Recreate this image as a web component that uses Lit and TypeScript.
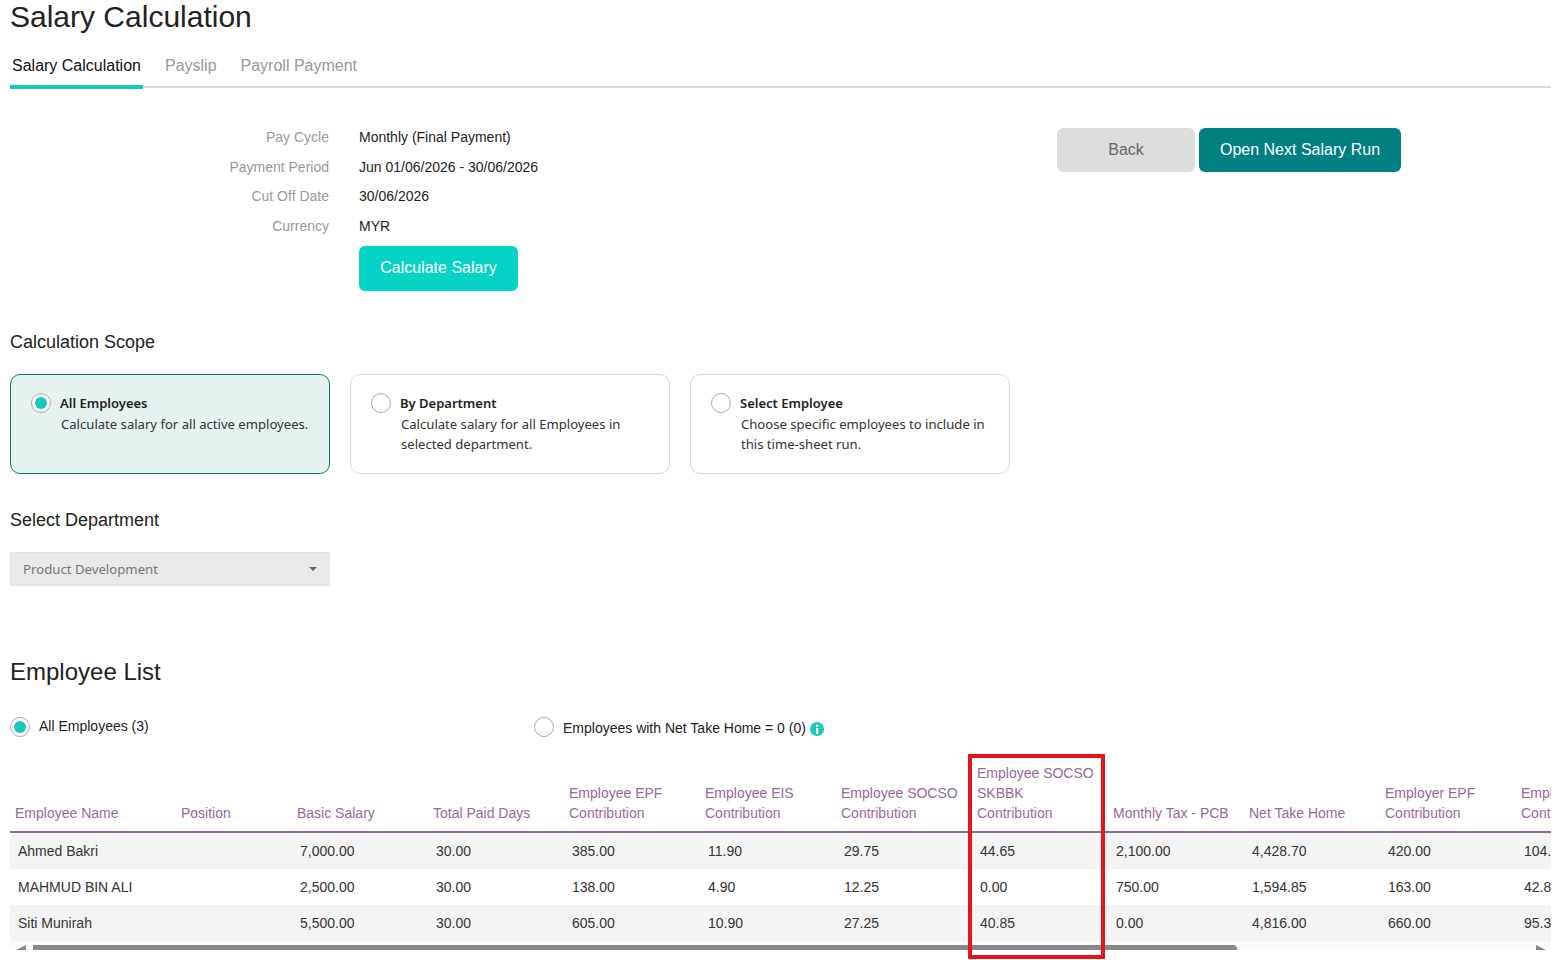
import { LitElement, html, css } from "lit";
import { customElement } from "lit/decorators.js";

const HEADERS = [
  ["Employee Name"],
  ["Position"],
  ["Basic Salary"],
  ["Total Paid Days"],
  ["Employee EPF", "Contribution"],
  ["Employee EIS", "Contribution"],
  ["Employee SOCSO", "Contribution"],
  ["Employee SOCSO", "SKBBK", "Contribution"],
  ["Monthly Tax - PCB"],
  ["Net Take Home"],
  ["Employer EPF", "Contribution"],
  ["Employer EIS", "Contribution"],
];

const ROWS = [
  ["Ahmed Bakri", "", "7,000.00", "30.00", "385.00", "11.90", "29.75", "44.65", "2,100.00", "4,428.70", "420.00", "104.65"],
  ["MAHMUD BIN ALI", "", "2,500.00", "30.00", "138.00", "4.90", "12.25", "0.00", "750.00", "1,594.85", "163.00", "42.80"],
  ["Siti Munirah", "", "5,500.00", "30.00", "605.00", "10.90", "27.25", "40.85", "0.00", "4,816.00", "660.00", "95.30"],
];

const COL_WIDTHS = [166, 116, 136, 136, 136, 136, 136, 136, 136, 136, 136, 136];

const SCOPES = [
  { title: "All Employees", text: "Calculate salary for all active employees.", on: true },
  { title: "By Department", text: "Calculate salary for all Employees in selected department.", on: false },
  { title: "Select Employee", text: "Choose specific employees to include in this time-sheet run.", on: false },
];

const INFO = [
  ["Pay Cycle", "Monthly (Final Payment)"],
  ["Payment Period", "Jun 01/06/2026 - 30/06/2026"],
  ["Cut Off Date", "30/06/2026"],
  ["Currency", "MYR"],
];

@customElement("app-root")
export class AppRoot extends LitElement {
  static styles = css`
    :host {
      display: block;
      height: 960px;
      overflow: hidden;
      padding: 0 15px 0 10px;
      font-family: "Liberation Sans", Arial, sans-serif;
      font-size: 14px;
      color: #333;
      background: #fff;
    }
    h1 {
      margin: 0;
      font-size: 30px;
      font-weight: 400;
      line-height: 34px;
      color: #222;
    }
    .tabs {
      display: flex;
      height: 52px;
      border-bottom: 2px solid #cfdcdc;
    }
    .tab {
      height: 29px;
      margin: 0 20px -3px 0;
      padding: 22px 2px 0;
      font-size: 16px;
      line-height: 20px;
      color: #999;
    }
    .tab.active {
      color: #111;
      border-bottom: 4px solid #17c9b8;
    }
    .summary {
      display: flex;
      align-items: flex-start;
      margin-top: 34.3px;
      padding-right: 150px;
    }
    .info {
      display: grid;
      grid-template-columns: 319px auto;
      grid-auto-rows: 29.6px;
      column-gap: 30px;
      align-items: center;
    }
    .info .label {
      text-align: right;
      color: #999;
    }
    .info .value {
      color: #222;
    }
    .actions {
      display: flex;
      gap: 4px;
      margin: 5.7px 0 0 auto;
    }
    button {
      height: 44px;
      border: none;
      border-radius: 6px;
      font: inherit;
      font-size: 16px;
      cursor: pointer;
    }
    .back {
      width: 138px;
      background: #ddd;
      color: #666;
    }
    .next {
      width: 202px;
      background: #008080;
      color: #fff;
    }
    .calc {
      display: block;
      width: 159px;
      height: 45px;
      margin: 5.3px 0 0 349px;
      background: #05d3c6;
      color: #fff;
    }
    h2 {
      margin: 39px 0 0;
      font-size: 18px;
      font-weight: 400;
      line-height: 24px;
      color: #222;
    }
    .cards {
      display: flex;
      gap: 20px;
      margin-top: 20px;
    }
    .card {
      box-sizing: border-box;
      width: 320px;
      height: 100px;
      padding: 18px 20px;
      display: flex;
      gap: 9px;
      border: 1px solid #d3dadc;
      border-radius: 10px;
      font-family: "Noto Sans", sans-serif;
      font-size: 13.1px;
      line-height: 20px;
      color: #333;
    }
    .card.on {
      background: #e5f2ef;
      border-color: #00806f;
    }
    .card .title {
      font-size: 13px;
      font-weight: 600;
      color: #222;
      line-height: 20px;
    }
    .card .text {
      margin: 1px 0 0 1px;
    }
    .radio {
      box-sizing: border-box;
      flex: none;
      width: 20px;
      height: 20px;
      border: 1px solid #aaa;
      border-radius: 50%;
      background: #fff;
      display: flex;
      align-items: center;
      justify-content: center;
    }
    .radio.on::after {
      content: "";
      width: 12px;
      height: 12px;
      border-radius: 50%;
      background: #17c9b8;
    }
    .dept {
      margin-top: 34px;
    }
    .select {
      box-sizing: border-box;
      width: 320px;
      height: 34px;
      margin-top: 20px;
      padding: 0 12px;
      display: flex;
      align-items: center;
      justify-content: space-between;
      background: #e9e9e9;
      border: 1px solid #e2e2e2;
      font-family: "Noto Sans", sans-serif;
      font-size: 13.2px;
      color: #777;
    }
    .caret {
      width: 0;
      height: 0;
      border-left: 4px solid transparent;
      border-right: 4px solid transparent;
      border-top: 4px solid #666;
    }
    .list-title {
      margin: 71px 0 0;
      font-size: 24px;
      font-weight: 400;
      line-height: 30px;
      color: #222;
    }
    .filters {
      display: flex;
      height: 20px;
      margin-top: 30px;
      color: #222;
    }
    .filter {
      display: flex;
      align-items: center;
      gap: 9px;
    }
    .filter.first {
      width: 524px;
    }
    .filter.first span {
      padding-bottom: 2px;
    }
    .filter.second span {
      padding-top: 2px;
    }
    .filter svg {
      display: block;
      margin: 4px 0 0 -5px;
    }
    .grid-wrap {
      position: relative;
      margin-top: 18px;
    }
    .scroller {
      overflow: hidden;
    }
    table {
      table-layout: fixed;
      width: 1642px;
      border-collapse: separate;
      border-spacing: 0;
    }
    th {
      padding: 8px 5px;
      border-bottom: 2px solid #8f6a97;
      font-weight: 400;
      line-height: 20px;
      text-align: left;
      vertical-align: bottom;
      color: #96699a;
      white-space: nowrap;
    }
    th span {
      display: block;
    }
    td {
      height: 36px;
      padding: 0 8px;
      box-sizing: border-box;
      line-height: 20px;
      white-space: nowrap;
      overflow: visible;
    }
    tbody tr:nth-child(odd) td {
      background: #f4f4f4;
    }
    .bar {
      position: relative;
      height: 9px;
      background: #fbfbfb;
      overflow: hidden;
    }
    .thumb {
      width: 1204px;
      height: 5px;
      margin: 4px 0 0 23px;
      background: #888;
      border-radius: 0 4px 0 0;
    }
    .arrow {
      position: absolute;
      top: 4px;
      width: 10px;
      height: 5px;
      background: #888;
    }
    .arrow.left {
      left: 6px;
      clip-path: polygon(100% 0, 100% 100%, 0 100%);
    }
    .arrow.right {
      right: 5px;
      clip-path: polygon(0 0, 100% 100%, 0 100%);
    }
    .highlight {
      position: absolute;
      box-sizing: border-box;
      left: 958px;
      top: -1px;
      width: 137px;
      height: 205px;
      border: 4px solid #e8141c;
      pointer-events: none;
    }
  `;

  render() {
    return html`
      <h1>Salary Calculation</h1>
      <div class="tabs">
        <div class="tab active">Salary Calculation</div>
        <div class="tab">Payslip</div>
        <div class="tab">Payroll Payment</div>
      </div>

      <div class="summary">
        <div>
          <div class="info">
            ${INFO.map(([k, v]) => html`<div class="label">${k}</div><div class="value">${v}</div>`)}
          </div>
          <button class="calc">Calculate Salary</button>
        </div>
        <div class="actions">
          <button class="back">Back</button>
          <button class="next">Open Next Salary Run</button>
        </div>
      </div>

      <h2>Calculation Scope</h2>
      <div class="cards">
        ${SCOPES.map(
          (s) => html`
            <div class="card ${s.on ? "on" : ""}">
              <div class="radio ${s.on ? "on" : ""}"></div>
              <div>
                <div class="title">${s.title}</div>
                <div class="text">${s.text}</div>
              </div>
            </div>
          `
        )}
      </div>

      <h2 class="dept">Select Department</h2>
      <div class="select">
        <span>Product Development</span>
        <span class="caret"></span>
      </div>

      <h2 class="list-title">Employee List</h2>
      <div class="filters">
        <div class="filter first">
          <div class="radio on"></div>
          <span>All Employees (3)</span>
        </div>
        <div class="filter second">
          <div class="radio"></div>
          <span>Employees with Net Take Home = 0 (0)</span>
          <svg width="14" height="14" viewBox="0 0 14 14">
            <circle cx="7" cy="7" r="7" fill="#17c9b8"></circle>
            <rect x="6" y="6" width="2.2" height="6" fill="#fff"></rect>
            <rect x="6" y="2.6" width="2.2" height="2.2" fill="#fff"></rect>
          </svg>
        </div>
      </div>

      <div class="grid-wrap">
        <div class="scroller">
          <table>
            <colgroup>
              ${COL_WIDTHS.map((w) => html`<col style="width:${w}px" />`)}
            </colgroup>
            <thead>
              <tr>
                ${HEADERS.map((lines) => html`<th>${lines.map((l) => html`<span>${l}</span>`)}</th>`)}
              </tr>
            </thead>
            <tbody>
              ${ROWS.map((r) => html`<tr>${r.map((c) => html`<td>${c}</td>`)}</tr>`)}
            </tbody>
          </table>
        </div>
        <div class="bar">
          <div class="thumb"></div>
          <div class="arrow left"></div>
          <div class="arrow right"></div>
        </div>
        <div class="highlight"></div>
      </div>
    `;
  }
}
